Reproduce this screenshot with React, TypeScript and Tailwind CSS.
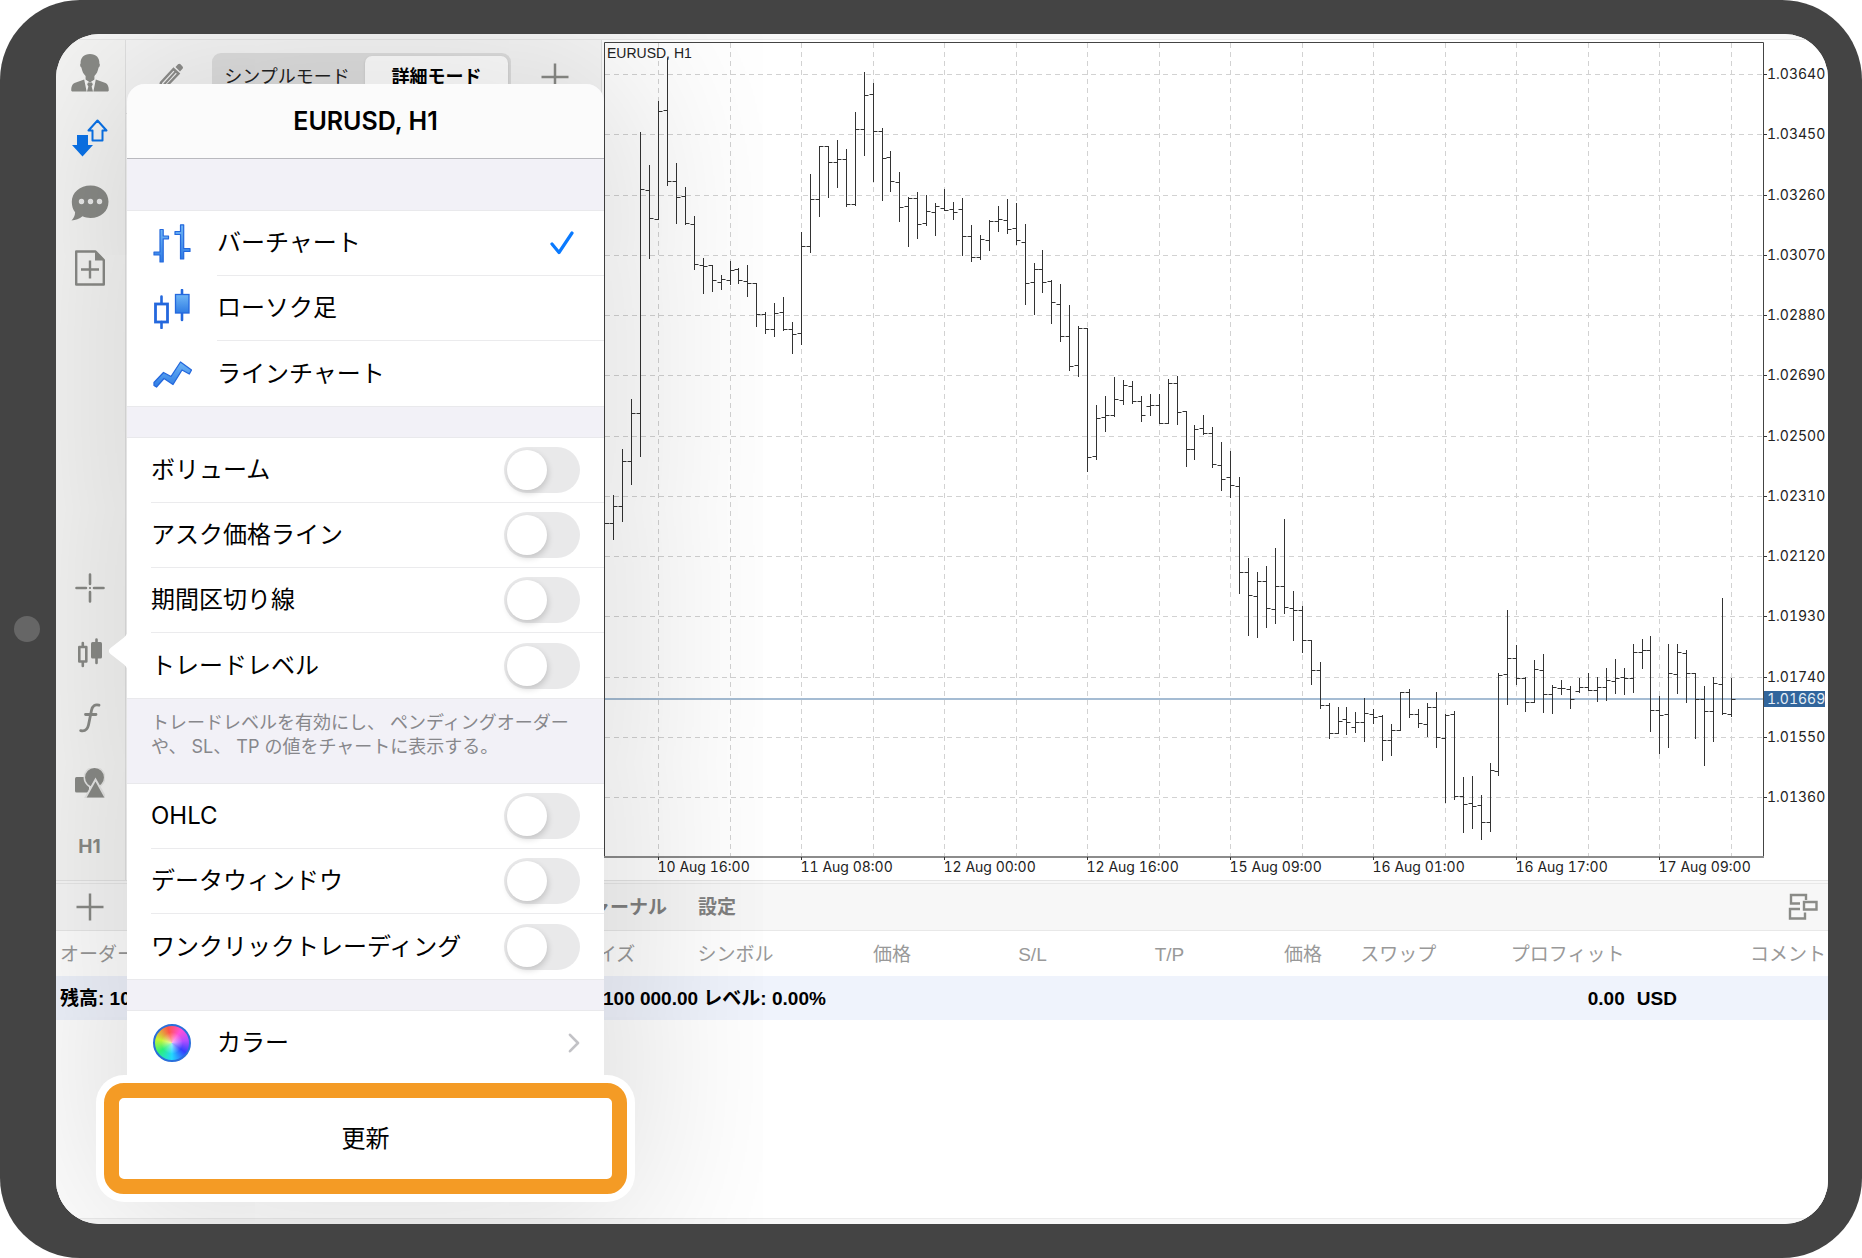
import React, { useState } from 'react';

// Price bars in plot units: [open, high, low, close]
const BARS: number[][] = [
    [523, 495, 539, 506], [506, 449, 521, 461], [461, 399, 484, 413], [413, 132, 456, 189],
    [190, 165, 258, 218], [219, 101, 219, 111], [110, 58, 185, 181], [181, 163, 223, 197],
    [196, 187, 224, 223], [224, 216, 269, 264], [265, 258, 293, 266], [265, 265, 291, 280],
    [282, 275, 289, 279], [280, 261, 284, 270], [269, 268, 283, 280], [281, 265, 296, 283],
    [283, 283, 326, 314], [314, 312, 333, 329], [329, 303, 336, 313], [312, 297, 330, 329],
    [329, 322, 353, 334], [333, 232, 344, 246], [246, 174, 252, 199], [199, 146, 216, 146],
    [146, 146, 197, 162], [162, 140, 187, 159], [159, 149, 206, 204], [204, 112, 205, 129],
    [129, 72, 155, 95], [94, 83, 181, 131], [131, 128, 200, 158], [157, 151, 191, 181],
    [182, 172, 221, 207], [206, 197, 246, 198], [198, 192, 238, 224], [223, 195, 225, 211],
    [212, 203, 235, 206], [208, 189, 210, 210], [209, 202, 219, 212], [209, 198, 255, 236],
    [236, 225, 261, 257], [257, 235, 259, 239], [240, 220, 250, 221], [221, 206, 231, 219],
    [220, 199, 233, 229], [228, 203, 244, 240], [242, 224, 304, 283], [282, 263, 314, 269],
    [269, 250, 292, 282], [281, 280, 323, 302], [304, 284, 341, 336], [336, 305, 370, 366],
    [365, 326, 376, 328], [328, 328, 471, 457], [456, 405, 459, 418], [417, 396, 431, 415],
    [415, 377, 416, 399], [400, 380, 404, 385], [386, 381, 403, 401], [401, 396, 421, 415],
    [406, 394, 415, 405], [405, 394, 423, 423], [423, 379, 423, 383], [383, 376, 424, 412],
    [411, 411, 466, 449], [449, 425, 459, 429], [428, 415, 434, 433], [433, 427, 467, 464],
    [465, 442, 490, 479], [477, 451, 497, 485], [486, 477, 593, 572], [572, 558, 635, 595],
    [596, 572, 637, 581], [581, 566, 627, 608], [609, 548, 623, 586], [586, 519, 613, 607],
    [608, 591, 640, 610], [610, 606, 652, 640], [640, 640, 684, 670], [670, 662, 708, 705],
    [705, 703, 738, 733], [733, 707, 733, 721], [719, 707, 734, 722], [727, 712, 732, 722],
    [722, 698, 741, 713], [714, 709, 723, 717], [716, 715, 760, 740], [740, 724, 755, 730],
    [730, 692, 730, 692], [692, 689, 717, 714], [714, 709, 727, 723], [724, 703, 736, 707],
    [707, 692, 747, 737], [738, 714, 802, 715], [714, 711, 799, 796], [796, 777, 832, 804],
    [803, 776, 828, 806], [805, 795, 839, 822], [822, 763, 831, 770], [771, 673, 775, 675],
    [674, 610, 704, 658], [658, 645, 684, 678], [678, 677, 711, 702], [702, 660, 702, 669],
    [670, 654, 712, 694], [694, 685, 713, 687], [688, 680, 694, 688], [689, 686, 708, 699],
    [691, 678, 692, 687], [687, 673, 690, 690], [690, 677, 701, 687], [687, 668, 700, 680],
    [681, 659, 693, 678], [677, 668, 694, 678], [678, 644, 692, 652], [652, 639, 668, 650],
    [650, 636, 731, 710], [710, 696, 753, 715], [714, 644, 747, 673], [674, 644, 693, 652],
    [653, 650, 702, 673], [673, 673, 738, 699], [699, 686, 765, 711], [711, 677, 741, 683],
    [684, 598, 714, 713], [714, 678, 716, 699],
];

const PRICES = [
    '1.03640', '1.03450', '1.03260', '1.03070', '1.02880', '1.02690', '1.02500',
    '1.02310', '1.02120', '1.01930', '1.01740', '1.01550', '1.01360',
];

const DATES = [
    '10 Aug 16:00', '11 Aug 08:00', '12 Aug 00:00', '12 Aug 16:00',
    '15 Aug 09:00', '16 Aug 01:00', '16 Aug 17:00', '17 Aug 09:00',
];

const COL_STEP = 71.53;
const ROW_STEP = 60.25;
const colX = (i: number) => Math.round(658 + COL_STEP * i) + 0.5;
const rowY = (i: number) => Math.round(74 + ROW_STEP * i) + 0.5;
const barX = (i: number) => Math.round(658 + (COL_STEP / 8) * (i - 5)) + 0.5;

const Chart: React.FC = () => (
    <svg viewBox="602 40 1226 840" className="block h-auto w-full" role="img" aria-label="EURUSD, H1">
        <g stroke="#d2d2d2" strokeDasharray="5 4">
            {Array.from({ length: 16 }, (_, i) => (
                <line key={i} x1={colX(i)} x2={colX(i)} y1={43} y2={857} />
            ))}
            {PRICES.map((p, i) => (
                <line key={p} x1={605} x2={1764} y1={rowY(i)} y2={rowY(i)} />
            ))}
        </g>
        <path d="M605 699H1764" stroke="#a5bcd3" strokeWidth={2} />
        <g stroke="#333" fill="none">
            <path d="M605 523.5h4" />
            {BARS.map(([o, h, l, c], i) => {
                const x = barX(i);
                return (
                    <path
                        key={i}
                        d={`M${x} ${h}V${l + 1}M${x - 4} ${o + 0.5}H${x}M${x} ${c + 0.5}H${x + 4}`}
                    />
                );
            })}
        </g>
        <path d="M604.5 857V42.5H1763.5V857" fill="none" stroke="#444" />
        <path d="M604 857H1764" stroke="#8c8c8c" strokeWidth={2} />
        <g className="font-['Inter',sans-serif] text-[14px] tabular-nums" fill="#222">
            {PRICES.map((p, i) => (
                <g key={p}>
                    <path d={`M1764 ${rowY(i)}h3`} stroke="#333" />
                    <text x={1767} y={rowY(i) + 4.5}>{p}</text>
                </g>
            ))}
            {DATES.map((d, i) => (
                <g key={d}>
                    <path d={`M${colX(i * 2)} 857v3`} stroke="#333" />
                    <text x={colX(i * 2) - 1} y={872}>{d}</text>
                </g>
            ))}
            <rect x={1764} y={691} width={61} height={16} fill="#31659c" />
            <text x={1767} y={704} fill="#e6eef6">1.01669</text>
        </g>
        <text x={607} y={58} className="font-['Liberation_Sans',Arial,sans-serif] text-[14px]" fill="#222">
            EURUSD, H1
        </text>
    </svg>
);

const GREY = '#8a8b87';

const UserIcon = () => (
    <svg width="38" height="38" viewBox="0 0 38 38" fill={GREY}>
        <path d="M19 0c-6 0-9.6 3.6-9.4 9.4-.9.6-.5 3.4.8 4.2.7 3.6 2 6.6 4.2 8.4v3.4l4.4 3 4.4-3V22c2.200-1.800 3.500-4.800 4.200-8.400 1.300-.8 1.700-3.600.8-4.200C28.600 3.600 25 0 19 0z" />
        <path d="M13.200 25.500L3.500 29C1.200 30 .2 32.500.2 36.600L1 37.500h14.600zM24.800 25.500l9.700 3.500c2.300 1 3.300 3.500 3.300 7.600l-.8.9H22.400z" />
        <path d="M17 28.500h4l.8 2-1.200 2 1.400 5h-6l1.400-5-1.200-2z" />
    </svg>
);

const ArrowsIcon = () => (
    <svg width="36" height="38" viewBox="0 0 36 38" fill="none">
        <path d="M25.500 1.500L34.500 11.500H30.500V21.500H20.500V11.500H16.500z" stroke="#0a73ea" strokeWidth="2" strokeLinejoin="round" />
        <path d="M5 16h11v10h5L10.500 37.500 0 26h5z" fill="#0a73ea" />
    </svg>
);

const ChatIcon = () => (
    <svg width="38" height="36" viewBox="0 0 38 36" fill={GREY}>
        <path d="M19.500.5C30 .5 37.500 7.500 37.500 16.800S30 33 19.500 33c-3 0-5.600-.6-8-1.700C8.500 34 4.500 35.300.5 35.500c2.200-2.200 3.500-4.800 3.600-8.200C1.800 24.500.8 20.800.8 16.800.8 7.500 9 .5 19.500.5z" />
        <circle cx="10.500" cy="16.500" r="2.700" fill="#ebebeb" />
        <circle cx="19.500" cy="16.500" r="2.700" fill="#ebebeb" />
        <circle cx="28.500" cy="16.500" r="2.700" fill="#ebebeb" />
    </svg>
);

const NewDocIcon = () => (
    <svg width="30" height="36" viewBox="0 0 30 36" fill="none" stroke={GREY} strokeWidth="2.400">
        <path d="M1.200 1.500h19.300l8.300 8.500v24.500H1.200z" strokeLinejoin="round" />
        <path d="M20 2v8.500h9z" fill={GREY} stroke="none" />
        <path d="M15 10.500v18M6 19.500h18" />
    </svg>
);

const CrosshairIcon = () => (
    <svg width="30" height="30" viewBox="0 0 30 30" stroke={GREY} strokeWidth="2.600" strokeLinecap="round">
        <path d="M15 1.500v9.500M15 19v9.500M1.500 15H11M19 15h9.500" />
        <path d="M14.900 15h.2" strokeWidth="2" />
    </svg>
);

const CandlesIcon = () => (
    <svg width="26" height="30" viewBox="0 0 26 30" fill="none" stroke={GREY} strokeWidth="2.600" strokeLinecap="round">
        <path d="M2.300 9h7v14.500h-7zM5.800 5v4M5.800 23.500v4.500M19.500 1.500V5M19.500 20v5" strokeLinejoin="round" />
        <rect x="14" y="4" width="11" height="16.500" rx="1.500" fill={GREY} stroke="none" />
    </svg>
);

const FunctionIcon = () => (
    <svg width="22" height="30" viewBox="0 0 22 30" fill="none" stroke={GREY} strokeWidth="2.800" strokeLinecap="round">
        <path d="M20 2.200c-4-1-6.500.5-7.500 5L9.500 22c-1 4.500-3.500 6.500-7.800 5.600M6.500 11.500H17" />
    </svg>
);

const ShapesIcon = () => (
    <svg width="30" height="30" viewBox="0 0 30 30" fill={GREY}>
        <rect x="0" y="9" width="14" height="15.500" rx="1.500" />
        <circle cx="19.500" cy="9.500" r="10.200" stroke="#e6e6e5" strokeWidth="1.500" />
        <path d="M20.500 11.500L31 30.500H10z" stroke="#e6e6e5" strokeWidth="2" />
    </svg>
);

const PlusIcon = () => (
    <svg width="28" height="28" viewBox="0 0 28 28" stroke={GREY} strokeWidth="2.500">
        <path d="M14 0.500v27M0.500 14h27" />
    </svg>
);

const PencilIcon = () => (
    <svg width="26" height="28" viewBox="0 0 26 28" fill="none" stroke="#8f8f8d" strokeWidth="2.500">
        <path d="M15.500 6L3 19.500 1.500 26l6.200-2L20.500 10.500z" />
        <path d="M18 8.200L6 21.500" strokeWidth="2" />
        <path d="M17.500 4L20 1.200c.8-.8 1.800-.7 2.500 0l2 2.200c.7.700.6 1.700 0 2.400L22 8.600z" fill="#8f8f8d" stroke="none" />
    </svg>
);

const WindowsIcon = () => (
    <svg width="30" height="28" viewBox="0 0 30 28" fill="none" stroke={GREY} strokeWidth="2.400">
        <path d="M18 7V2H3v8.500h9" />
        <path d="M16 9h12.500v7.500H16z" />
        <path d="M12 16H2v9.500h15v-6" />
    </svg>
);

const BlueFill = ({ id }: { id: string }) => (
    <defs>
        <linearGradient id={id} x1="0" y1="0" x2="0" y2="1">
            <stop offset="0" stopColor="#6fb6f5" />
            <stop offset="1" stopColor="#2f7ce4" />
        </linearGradient>
    </defs>
);

const BarsIcon = () => (
    <svg width="38" height="40" viewBox="0 0 38 40" fill="url(#bars)" stroke="#2468dd" strokeWidth="1.200" strokeLinejoin="round">
        <BlueFill id="bars" />
        <path d="M7 5.500h3.200V12H15.500v2.800h-5.300V38H7V31H1v-3h6z" />
        <path d="M27.500 .8h3.200V24.500h6.300v3h-6.300v7.500h-3.200V10.500H22V7.500h5.500z" />
    </svg>
);

const CandleChartIcon = () => (
    <svg width="38" height="40" viewBox="0 0 38 40" fill="none" stroke="#2468dd">
        <BlueFill id="candle" />
        <path d="M8.500 7.500V14M8.500 33v6M29 1v5M29 24v7" strokeWidth="2.600" strokeLinecap="round" />
        <rect x="2.500" y="15" width="12" height="18" strokeWidth="2.800" />
        <rect x="22.500" y="5.500" width="13.500" height="18.500" fill="url(#candle)" strokeWidth="1.300" />
    </svg>
);

const LineChartIcon = () => (
    <svg width="40" height="30" viewBox="0 0 40 30" fill="url(#line)" stroke="#2468dd" strokeWidth="1.300" strokeLinejoin="round">
        <BlueFill id="line" />
        <path d="M1 23.500L10.500 13.500l7.500 4L27.500 3l11 8-2.200 4-7.300-4L20 25.500l-9-6L3.500 28 1 26.500z" />
    </svg>
);

const sideTop = [
    { name: 'account', icon: <UserIcon /> },
    { name: 'trade', icon: <ArrowsIcon /> },
    { name: 'messages', icon: <ChatIcon /> },
    { name: 'new order', icon: <NewDocIcon /> },
];

const sideBottom = [
    { name: 'crosshair', icon: <CrosshairIcon /> },
    { name: 'chart settings', icon: <CandlesIcon /> },
    { name: 'indicators', icon: <FunctionIcon /> },
    { name: 'objects', icon: <ShapesIcon /> },
    { name: 'timeframe', icon: <span className="text-[19px] font-bold text-[#8a8b87]">H1</span> },
];

const SideButton: React.FC<{ name: string; children: React.ReactNode }> = ({ name, children }) => (
    <button type="button" aria-label={name} className="flex h-[65px] items-center justify-center">
        {children}
    </button>
);

const Group: React.FC<{ children: React.ReactNode }> = ({ children }) => (
    <div className="border-y border-[#e9e9ec] bg-white">{children}</div>
);

const chartTypes = [
    { label: 'バーチャート', icon: <BarsIcon /> },
    { label: 'ローソク足', icon: <CandleChartIcon /> },
    { label: 'ラインチャート', icon: <LineChartIcon /> },
];

const ToggleRow: React.FC<{ label: string }> = ({ label }) => {
    const [on, setOn] = useState(false);

    return (
        <label className="group flex h-[65px] pl-6">
            <span className="flex flex-1 items-center justify-between border-b border-[#ebebed] pr-6 group-last:border-b-0">
                {label}
                <input
                    type="checkbox"
                    role="switch"
                    checked={on}
                    onChange={() => setOn(!on)}
                    className="flex h-[46px] w-[76px] appearance-none items-center rounded-full bg-[#e9e9ea] px-[3px] before:size-10 before:rounded-full before:bg-white before:shadow-[1px_3px_6px_rgba(0,0,0,0.16)] checked:justify-end checked:bg-[#34c759]"
                />
            </span>
        </label>
    );
};

const SettingsPopover: React.FC = () => {
    const [type, setType] = useState(0);

    return (
        <section className="absolute top-[50px] left-[71px] w-[477px] rounded-t-[18px] bg-[#f2f1f7] text-[24px] leading-8 text-black shadow-[0_0_180px_30px_rgba(0,0,0,0.14)]">
            {/* Pointer to the sidebar button */}
            <svg width="20" height="44" viewBox="0 0 20 44" className="absolute top-[545px] -left-[19px]" fill="#fff">
                <path d="M20 0c0 4-1.500 6-4 8.500L2.500 19c-2.200 2-2.200 4 0 6L16 35.500c2.500 2.500 4 4.500 4 8.500z" />
            </svg>

            <h2 className="flex h-[75px] items-center justify-center rounded-t-[18px] border-b border-[#b9b9be] bg-[#fbfbfb] text-[25px] font-semibold">
                EURUSD, H1
            </h2>
            <div className="h-[51px]" />

            <Group>
                {chartTypes.map((item, index) => (
                    <button
                        key={item.label}
                        type="button"
                        onClick={() => setType(index)}
                        className="group flex h-[65px] w-full items-center pl-[26px] text-left"
                    >
                        <span className="w-16 shrink-0">{item.icon}</span>
                        <span className="flex flex-1 items-center justify-between self-stretch border-b border-[#ebebed] pr-[30px] group-last:border-b-0">
                            {item.label}
                            {type === index && (
                                <svg width="24" height="24" viewBox="0 0 24 24" fill="none" stroke="#0a7aff" strokeWidth="3.200" strokeLinecap="round" strokeLinejoin="round">
                                    <path d="M2 13l7 8.500L22 2" />
                                </svg>
                            )}
                        </span>
                    </button>
                ))}
            </Group>
            <div className="h-[30px]" />

            <Group>
                <ToggleRow label="ボリューム" />
                <ToggleRow label="アスク価格ライン" />
                <ToggleRow label="期間区切り線" />
                <ToggleRow label="トレードレベル" />
            </Group>
            <p className="h-[84px] px-6 pt-3 text-[18px] leading-6 text-[#87878b]">
                トレードレベルを有効にし、 ペンディングオーダーや、 SL、 TP の値をチャートに表示する。
            </p>

            <Group>
                <ToggleRow label="OHLC" />
                <ToggleRow label="データウィンドウ" />
                <ToggleRow label="ワンクリックトレーディング" />
            </Group>
            <div className="h-[30px]" />

            <button type="button" className="flex h-[65px] w-full items-center border-t border-[#e9e9ec] bg-white pr-6 pl-[26px] text-left">
                <span className="w-16 shrink-0">
                    <span className="block size-[38px] rounded-full border-2 border-[#2a6fdb] bg-[radial-gradient(circle,rgba(255,255,255,0.6),rgba(255,255,255,0)_45%),conic-gradient(from_-15deg,#ff5548,#ff4fd8_50deg,#b44dff_95deg,#3340ff_140deg,#22d8ff_195deg,#2bf07a_250deg,#c8f535_300deg,#ff5548)]" />
                </span>
                <span className="flex-1">カラー</span>
                <svg width="12" height="20" viewBox="0 0 12 20" fill="none" stroke="#c2c2c6" strokeWidth="2.600" strokeLinecap="round" strokeLinejoin="round">
                    <path d="M2 1.800L10 10l-8 8.200" />
                </svg>
            </button>

            <div className="-mx-[31px] rounded-[28px] bg-white p-2">
                <button type="button" className="h-[111px] w-full rounded-[20px] border-[15px] border-[#f49b25] bg-white">
                    更新
                </button>
            </div>
        </section>
    );
};

const TradePanel: React.FC = () => (
    <div className="flex flex-1 flex-col border-t border-[#e4e4e4] bg-[#f8f8f8] pt-0.5 font-['Liberation_Sans','Noto_Sans_CJK_JP',sans-serif] text-[19px]">
        <div className="flex h-[48px] items-center border-y border-[#e8e8e8] bg-[#f7f7f7] pr-[10px] pl-5 font-bold text-[#808080]">
            <button type="button" aria-label="new order">
                <PlusIcon />
            </button>
            <nav className="ml-[469px] flex flex-1 gap-[31px] pt-[3px]">
                <button type="button">ジャーナル</button>
                <button type="button">設定</button>
            </nav>
            <button type="button" aria-label="layout">
                <WindowsIcon />
            </button>
        </div>
        <div className="flex-1 bg-white">
            <table className="w-full table-fixed text-left whitespace-nowrap">
                <thead className="text-[#999]">
                    <tr className="h-[45px] *:p-0 *:pt-1 *:font-normal">
                        <th className="w-[29.5%] indent-1">オーダー</th>
                        <th className="w-[6.7%]">サイズ</th>
                        <th className="w-[9.9%]">シンボル</th>
                        <th className="w-[8.2%]">価格</th>
                        <th className="w-[7.7%]">S/L</th>
                        <th className="w-[7.3%]">T/P</th>
                        <th className="w-[4.3%]">価格</th>
                        <th className="w-[8.5%]">スワップ</th>
                        <th className="w-[13.5%]">プロフィット</th>
                        <th className="w-[4.4%]">コメント</th>
                    </tr>
                </thead>
                <tbody>
                    <tr className="h-11 bg-[#eff3fc] font-bold text-black *:p-0 *:pt-0.5">
                        <td colSpan={8}>
                            <span className="ml-1 inline-block w-[543px]">残高: 100 000.00</span>
                            <span>100 000.00 レベル: 0.00%</span>
                        </td>
                        <td colSpan={2}>
                            <span className="mr-3 ml-[77px]">0.00</span>
                            <span>USD</span>
                        </td>
                    </tr>
                </tbody>
            </table>
        </div>
        <div className="h-1.5 border-t border-[#ececec]" />
    </div>
);

const App: React.FC = () => (
    <div className="flex min-h-screen rounded-[80px] bg-[#444] py-[34px] pr-[34px] font-['Inter','Noto_Sans_CJK_JP',sans-serif]">
        <div className="flex w-14 shrink-0 items-center justify-center pr-0.5">
            <span className="size-[26px] rounded-full bg-[#666]" />
        </div>

        <main className="relative flex min-w-0 flex-1 flex-col overflow-hidden rounded-[44px] bg-white">
            <div className="h-1.5 border-b border-[#e8e8e8] bg-[#f8f8f8]" />

            <div className="flex">
                <aside className="flex w-[70px] shrink-0 flex-col justify-between border-r border-[#e2e2e2] bg-[#f6f6f5] pr-0.5">
                    <div className="flex flex-col">
                        {sideTop.map((item) => (
                            <SideButton key={item.name} name={item.name}>{item.icon}</SideButton>
                        ))}
                    </div>
                    <div className="flex flex-col">
                        {sideBottom.map((item) => (
                            <SideButton key={item.name} name={item.name}>{item.icon}</SideButton>
                        ))}
                    </div>
                </aside>

                <div className="w-[476px] shrink-0 border-r border-[#e2e2e2] bg-[#f7f7f7]">
                    <div className="flex h-[74px] items-center border-b border-[#e2e2e2] pl-8">
                        <button type="button" aria-label="edit">
                            <PencilIcon />
                        </button>
                        <div className="ml-7 flex h-12 w-[299px] rounded-[9px] bg-[#e0e0e0] p-[3px] text-[18px] text-[#222]">
                            <button type="button" className="flex-1 pr-1.5">シンプルモード</button>
                            <button type="button" className="w-[143px] rounded-[7px] bg-white font-bold text-black shadow-sm">
                                詳細モード
                            </button>
                        </div>
                        <button type="button" aria-label="add" className="ml-[30px]">
                            <PlusIcon />
                        </button>
                    </div>
                </div>

                <div className="min-w-0 flex-1 bg-white">
                    <Chart />
                </div>
            </div>

            <TradePanel />
            <SettingsPopover />
        </main>
    </div>
);

export default App;
